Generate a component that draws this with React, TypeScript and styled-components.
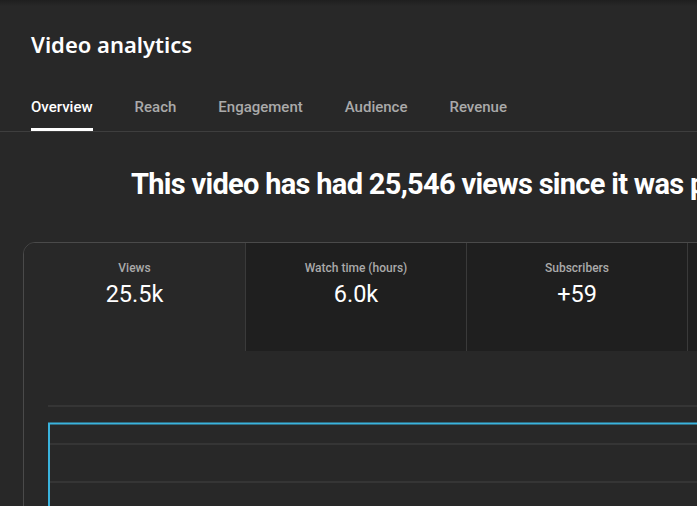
import React from "react";
import styled, { createGlobalStyle } from "styled-components";

const Global = createGlobalStyle`
  html, body { margin: 0; padding: 0; background: #282828; }
  body { overflow: hidden; font-family: Roboto, "Noto Sans", Arial, sans-serif; }
  * { box-sizing: border-box; }
`;

const Page = styled.div`
  width: 697px;
  height: 506px;
  background: #282828;
  overflow: hidden;
  position: relative;
`;

const TopShade = styled.div`
  height: 6px;
  background: linear-gradient(#1f1f1f, #282828);
`;

const Header = styled.header`
  border-bottom: 1px solid #3e3e3e;
  padding-left: 31px;
`;

const Title = styled.h1`
  margin: 0;
  padding-top: 23px;
  height: 84px;
  font-family: "Noto Sans", "Open Sans", sans-serif;
  font-weight: 600;
  font-size: 22px;
  line-height: 30px;
  color: #ffffff;
`;

const TabBar = styled.nav`
  display: flex;
  gap: 42px;
`;

const Tab = styled.div<{ $active?: boolean }>`
  height: 41px;
  padding-top: 8px;
  font-family: Roboto, sans-serif;
  font-weight: 500;
  font-size: 15px;
  line-height: 18px;
  color: ${(p) => (p.$active ? "#ffffff" : "#aaaaaa")};
  border-bottom: 3px solid ${(p) => (p.$active ? "#ffffff" : "transparent")};
`;

const Headline = styled.h2`
  margin: 0;
  padding: 35px 0 0 131px;
  height: 110px;
  white-space: nowrap;
  font-family: Roboto, sans-serif;
  font-weight: 700;
  font-size: 29px;
  line-height: 34px;
  color: #ffffff;
  letter-spacing: -0.7px;
`;

const Card = styled.section`
  margin-left: 23px;
  width: 1000px;
  border: 1px solid #4a4a4a;
  border-radius: 12px;
  overflow: hidden;
  height: 400px;
`;

const MetricRow = styled.div`
  display: grid;
  grid-template-columns: repeat(4, 221px);
`;

const Metric = styled.div<{ $active?: boolean }>`
  height: 108px;
  padding-top: 17px;
  text-align: center;
  background: ${(p) => (p.$active ? "#282828" : "#1f1f1f")};
  border-left: ${(p) => (p.$active ? "none" : "1px solid #3a3a3a")};
`;

const MetricLabel = styled.div`
  font-family: Roboto, sans-serif;
  font-weight: 500;
  font-size: 12px;
  line-height: 16px;
  color: #aaaaaa;
`;

const MetricValue = styled.div`
  margin-top: 4px;
  font-family: Roboto, sans-serif;
  font-size: 23.5px;
  line-height: 28px;
  color: #ffffff;
`;

const ChartArea = styled.div`
  padding: 54px 0 0 24px;
`;

const metrics = [
  { label: "Views", value: "25.5k", active: true },
  { label: "Watch time (hours)", value: "6.0k" },
  { label: "Subscribers", value: "+59" },
  { label: "", value: "" },
];

const tabs = ["Overview", "Reach", "Engagement", "Audience", "Revenue"];

export default function App() {
  return (
    <>
      <Global />
      <Page>
        <TopShade />
        <Header>
          <Title>Video analytics</Title>
          <TabBar>
            {tabs.map((t, i) => (
              <Tab key={t} $active={i === 0}>
                {t}
              </Tab>
            ))}
          </TabBar>
        </Header>
        <Headline>This video has had 25,546 views since it was published</Headline>
        <Card>
          <MetricRow>
            {metrics.map((m, i) => (
              <Metric key={i} $active={m.active}>
                <MetricLabel>{m.label}</MetricLabel>
                <MetricValue>{m.value}</MetricValue>
              </Metric>
            ))}
          </MetricRow>
          <ChartArea>
            <svg width="960" height="160" viewBox="0 0 960 160">
              <rect x="0" y="0" width="960" height="2" fill="#353535" />
              <rect x="0" y="38" width="960" height="2" fill="#353535" />
              <rect x="0" y="76" width="960" height="2" fill="#353535" />
              <path d="M1 160 V18.5 H960" fill="none" stroke="#3ab3dd" strokeWidth="2" />
            </svg>
          </ChartArea>
        </Card>
      </Page>
    </>
  );
}
